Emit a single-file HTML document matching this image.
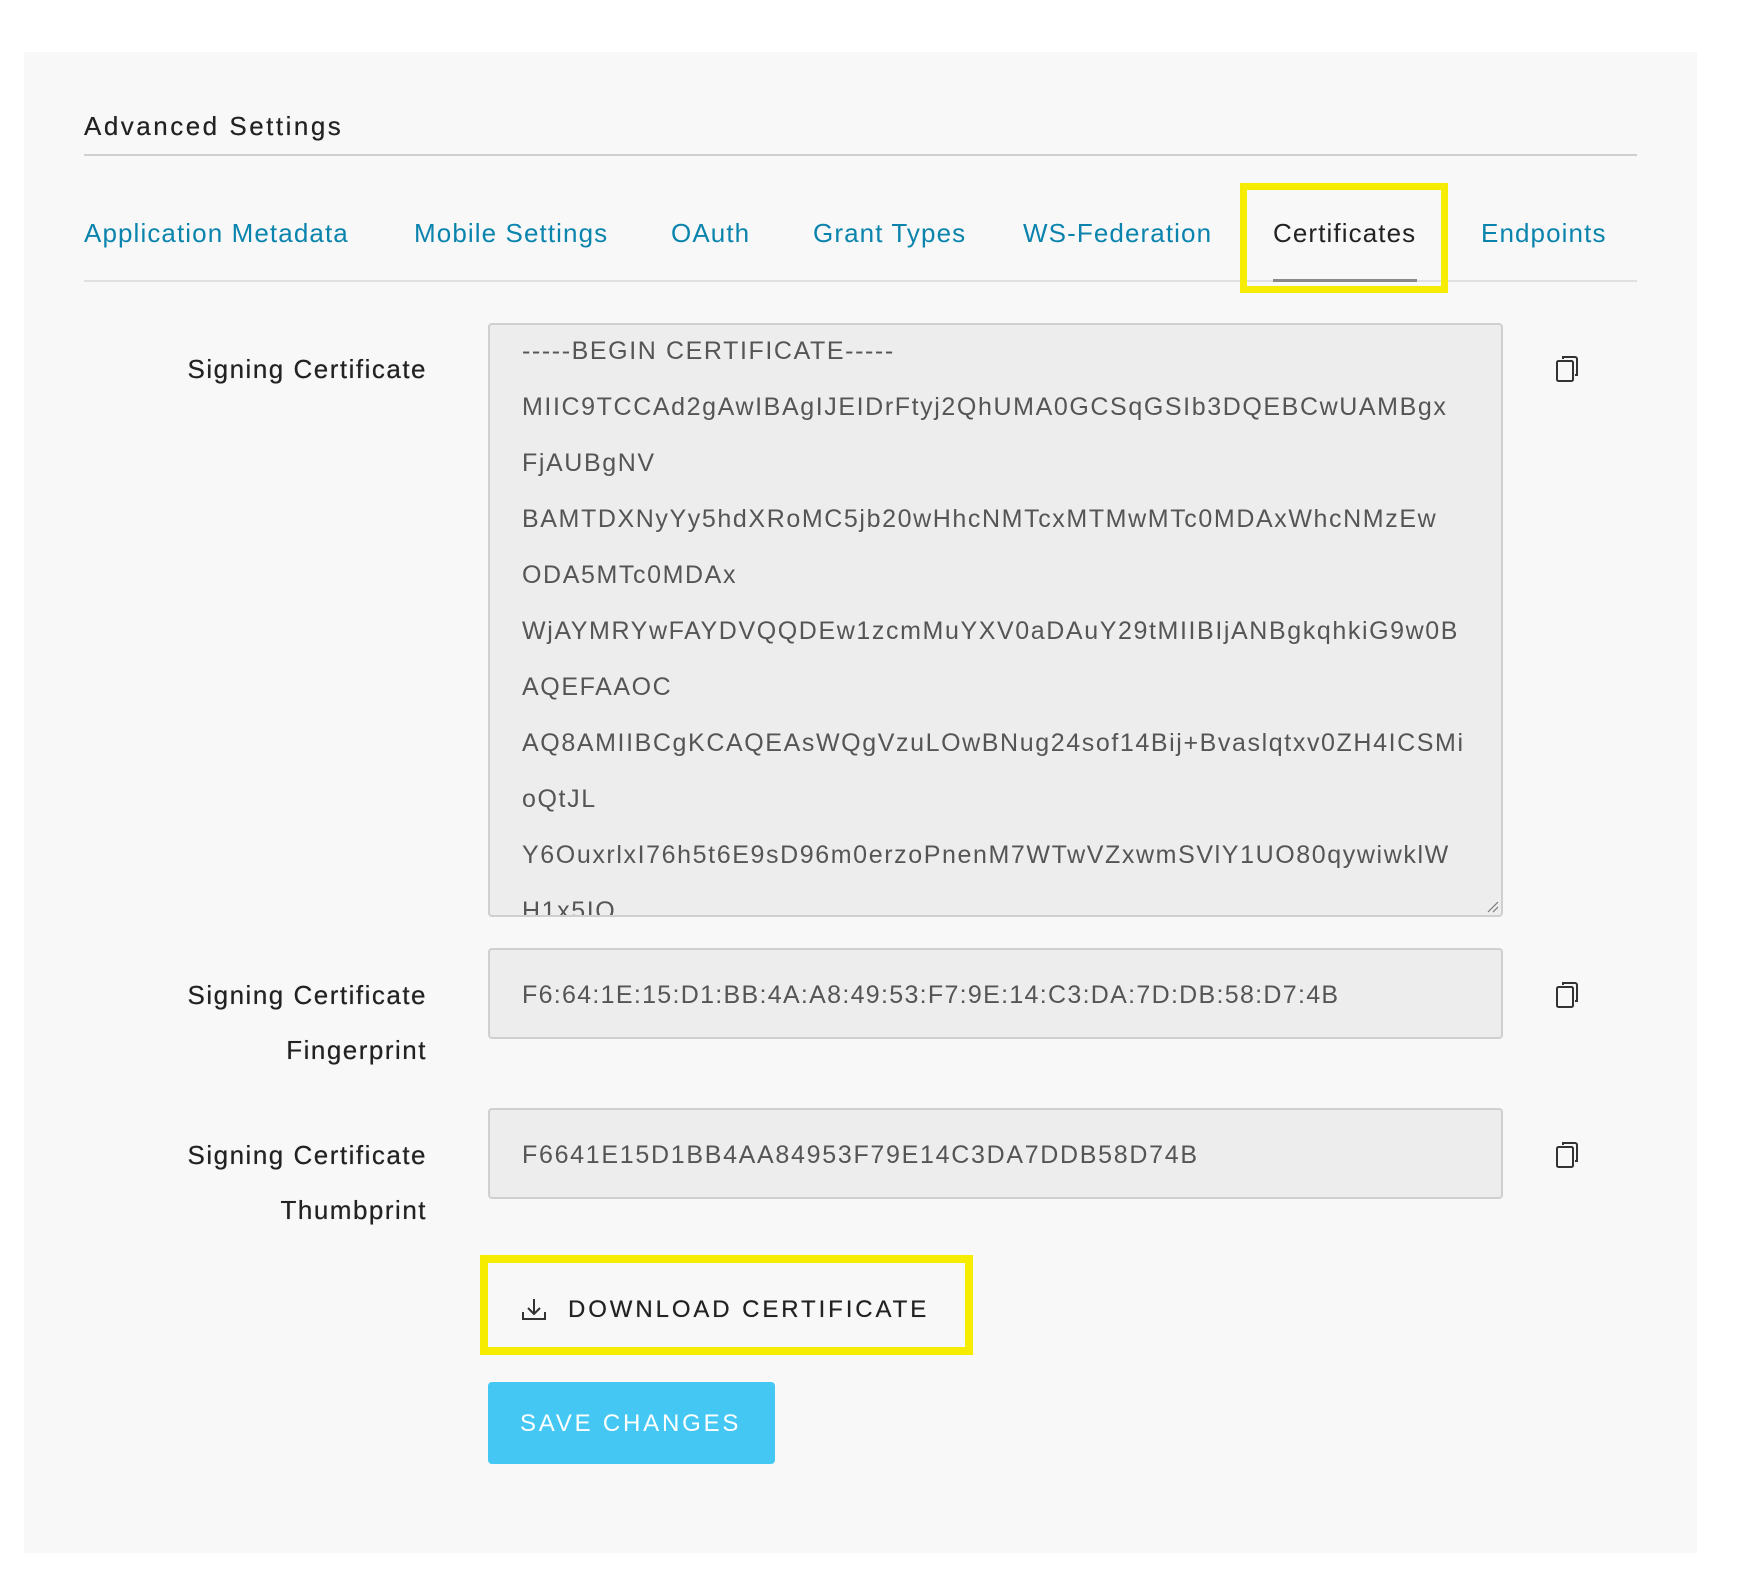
<!DOCTYPE html>
<html><head><meta charset="utf-8"><style>
*{margin:0;padding:0;box-sizing:border-box}
body{width:1740px;height:1580px;background:#fff;font-family:"Liberation Sans",sans-serif;position:relative;overflow:hidden}
.a{position:absolute;white-space:pre}
.panel{position:absolute;left:24px;top:52px;width:1673px;height:1501px;background:#f8f8f8}
.tab{position:absolute;top:218px;font-size:26px;letter-spacing:1.1px;color:#0b84ad;line-height:30px;white-space:pre}
.lbl{position:absolute;right:1313px;font-size:26px;letter-spacing:1.5px;color:#222;line-height:30px;text-align:right;text-shadow:0 0 0.5px #222;white-space:pre}
.box{position:absolute;background:#ededed;border:2px solid #cfcfcf;border-radius:4px}
.txt{position:absolute;left:522px;font-size:25px;letter-spacing:1.3px;color:#555;line-height:30px;white-space:pre}
.copy{position:absolute;left:1555px;width:28px;height:30px}
</style></head><body>
<div class="panel"></div>
<div class="a" style="left:84px;top:111px;font-size:26px;color:#222;letter-spacing:2.5px;line-height:30px;text-shadow:0 0 0.4px #222">Advanced Settings</div>
<div class="a" style="left:84px;top:154px;width:1553px;height:2px;background:#cfcfcf"></div>

<div class="tab" style="left:84px">Application Metadata</div>
<div class="tab" style="left:414px">Mobile Settings</div>
<div class="tab" style="left:671px">OAuth</div>
<div class="tab" style="left:813px">Grant Types</div>
<div class="tab" style="left:1023px">WS-Federation</div>
<div class="tab" style="left:1273px;color:#222">Certificates</div>
<div class="tab" style="left:1481px">Endpoints</div>
<div class="a" style="left:84px;top:280px;width:1553px;height:2px;background:#e0e0e0"></div>
<div class="a" style="left:1273px;top:279px;width:144px;height:3px;background:#8a8a8a"></div>
<div class="a" style="left:1240px;top:183px;width:208px;height:110px;border:7px solid #f5ec00"></div>

<div class="lbl" style="top:354px">Signing Certificate</div>
<div class="box" style="left:488px;top:323px;width:1015px;height:594px;overflow:hidden">
<div style="position:absolute;left:32px;top:-2px;font-size:25px;letter-spacing:1.6px;color:#555;line-height:56px;white-space:pre">-----BEGIN CERTIFICATE-----
MIIC9TCCAd2gAwIBAgIJEIDrFtyj2QhUMA0GCSqGSIb3DQEBCwUAMBgx
FjAUBgNV
BAMTDXNyYy5hdXRoMC5jb20wHhcNMTcxMTMwMTc0MDAxWhcNMzEw
ODA5MTc0MDAx
WjAYMRYwFAYDVQQDEw1zcmMuYXV0aDAuY29tMIIBIjANBgkqhkiG9w0B
AQEFAAOC
AQ8AMIIBCgKCAQEAsWQgVzuLOwBNug24sof14Bij+Bvaslqtxv0ZH4ICSMi
oQtJL
Y6OuxrlxI76h5t6E9sD96m0erzoPnenM7WTwVZxwmSVlY1UO80qywiwklW
H1x5IQ</div>
<svg style="position:absolute;right:2px;bottom:2px" width="14" height="14"><path d="M3 13L13 3M8 13L13 8" stroke="#777" stroke-width="1.2"/></svg>
</div>
<svg class="copy" style="top:354px" viewBox="0 0 28 30"><rect x="2" y="7" width="16" height="20" rx="1.5" fill="none" stroke="#333" stroke-width="2"/><path d="M8 5V3h12a2 2 0 0 1 2 2v16h-2" fill="none" stroke="#333" stroke-width="2"/></svg>

<div class="lbl" style="top:980px">Signing Certificate</div>
<div class="lbl" style="top:1035px">Fingerprint</div>
<div class="box" style="left:488px;top:948px;width:1015px;height:91px"></div>
<div class="txt" style="top:980px">F6:64:1E:15:D1:BB:4A:A8:49:53:F7:9E:14:C3:DA:7D:DB:58:D7:4B</div>
<svg class="copy" style="top:980px" viewBox="0 0 28 30"><rect x="2" y="7" width="16" height="20" rx="1.5" fill="none" stroke="#333" stroke-width="2"/><path d="M8 5V3h12a2 2 0 0 1 2 2v16h-2" fill="none" stroke="#333" stroke-width="2"/></svg>

<div class="lbl" style="top:1140px">Signing Certificate</div>
<div class="lbl" style="top:1195px">Thumbprint</div>
<div class="box" style="left:488px;top:1108px;width:1015px;height:91px"></div>
<div class="txt" style="top:1140px;letter-spacing:1.7px">F6641E15D1BB4AA84953F79E14C3DA7DDB58D74B</div>
<svg class="copy" style="top:1140px" viewBox="0 0 28 30"><rect x="2" y="7" width="16" height="20" rx="1.5" fill="none" stroke="#333" stroke-width="2"/><path d="M8 5V3h12a2 2 0 0 1 2 2v16h-2" fill="none" stroke="#333" stroke-width="2"/></svg>

<div class="a" style="left:480px;top:1255px;width:493px;height:100px;border:8px solid #f5ec00"></div>
<svg class="a" style="left:521px;top:1297px" width="26" height="25" viewBox="0 0 26 25"><path d="M13 2V17M7 11l6 6 6-6M2 15v7h22v-7" fill="none" stroke="#333" stroke-width="2"/></svg>
<div class="a" style="left:568px;top:1295px;font-size:24px;letter-spacing:2.9px;color:#222;line-height:30px;text-shadow:0 0 0.4px #222">DOWNLOAD CERTIFICATE</div>

<div class="a" style="left:488px;top:1382px;width:287px;height:82px;background:#44c8f3;border-radius:4px"></div>
<div class="a" style="left:520px;top:1409px;font-size:24px;letter-spacing:2.8px;color:#fff;line-height:30px">SAVE CHANGES</div>
</body></html>
